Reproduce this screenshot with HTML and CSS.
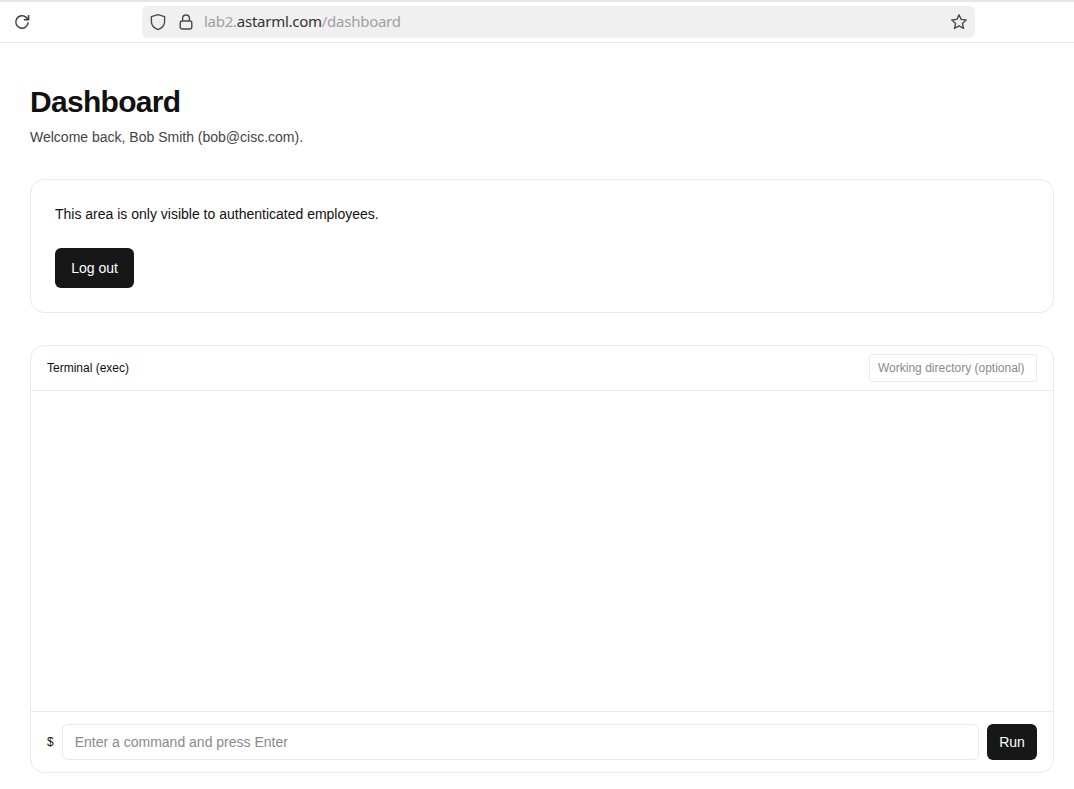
FILE: index.html
```html
<!DOCTYPE html>
<html lang="en">
<head>
<meta charset="utf-8">
<title>Dashboard</title>
<link rel="stylesheet" href="styles.css">
</head>
<body>
<header class="browser">
  <button class="tool" aria-label="Reload">
    <svg width="16" height="16" viewBox="0 0 16 16" fill="none" stroke="#3f3f3f" stroke-width="1.5" stroke-linejoin="round"><path d="M14.2 8.4A6.2 6.2 0 1 1 12.2 3.4L14.4 5.4"/><path d="M14.6 1V5.8H9.8" fill="none"/></svg>
  </button>
  <div class="urlbar">
    <svg class="shield" width="16" height="18" viewBox="0 0 16 18" fill="none" stroke="#4a4a4a" stroke-width="1.4" stroke-linejoin="round"><path d="M8 1.6 14.6 3.6V8.6C14.6 12.4 12 15.2 8 16.6 4 15.2 1.4 12.4 1.4 8.6V3.6Z"/></svg>
    <svg class="lock" width="14" height="16" viewBox="0 0 14 16" fill="none" stroke="#4a4a4a" stroke-width="1.4" stroke-linejoin="round"><rect x="1.2" y="7" width="11.6" height="8" rx="2"/><path d="M3.6 7V4.4a3.4 3.4 0 0 1 6.8 0V7"/></svg>
    <span class="url"><span class="dim">lab2.</span>astarml.com<span class="dim">/dashboard</span></span>
    <svg class="star" width="18" height="18" viewBox="0 0 18 18" fill="none" stroke="#4a4a4a" stroke-width="1.4" stroke-linejoin="round"><path d="M9 1.8 11.1 6.4 16.2 7 12.4 10.4 13.5 15.4 9 12.9 4.5 15.4 5.6 10.4 1.8 7 6.9 6.4Z"/></svg>
  </div>
</header>
<main class="page">
  <h1 class="title">Dashboard</h1>
  <p class="welcome">Welcome back, Bob Smith (bob@cisc.com).</p>
  <section class="card">
    <p class="notice">This area is only visible to authenticated employees.</p>
    <button class="btn btn-logout">Log out</button>
  </section>
  <section class="terminal">
    <div class="term-head">
      <span class="term-title">Terminal (exec)</span>
      <input class="cwd" type="text" placeholder="Working directory (optional)">
    </div>
    <div class="term-output"></div>
    <form class="term-input">
      <span class="prompt">$</span>
      <input class="cmd" type="text" placeholder="Enter a command and press Enter">
      <button class="btn btn-run" type="button">Run</button>
    </form>
  </section>
</main>
</body>
</html>
```
FILE: styles.css
```css
* { box-sizing: border-box; }
html, body { margin: 0; height: 100%; background: #fff; overflow: hidden; }
body { font-family: "Liberation Sans", Arial, sans-serif; color: #111; }

.browser {
  height: 43px;
  border-top: 2px solid #e6e6e6;
  border-bottom: 1px solid #e3e3e3;
  display: flex;
  align-items: center;
  padding: 0 99px 0 14px;
}
.tool { width: 16px; height: 16px; padding: 0; margin: 0 112px 0 0; border: 0; background: none; display: flex; }
.urlbar {
  flex: 1;
  height: 32px;
  margin-top: -1px;
  background: #f0f0f0;
  border-radius: 6px;
  display: flex;
  align-items: center;
  padding: 0 7px 0 8px;
}
.shield { margin-right: 13px; }
.lock { margin-right: 11px; }
.url { font: 15px "Noto Sans", sans-serif; color: #333; flex: 1; letter-spacing: -0.26px; margin-top: -1px; }
.dim { color: #a0a0a0; }

.page { padding: 41px 20px 0 30px; }
.title { margin: 0; font-size: 30px; line-height: 36px; font-weight: 700; letter-spacing: -0.7px; color: #111; }
.welcome { margin: 7px 0 0; font-size: 14px; line-height: 20px; color: #444; }

.card {
  margin-top: 32px;
  height: 134px;
  border: 1px solid #e9e9e9;
  border-radius: 14px;
  padding: 24px;
}
.notice { margin: 0 0 24px; font-size: 14px; line-height: 20px; color: #111; }

.btn {
  background: #171717;
  color: #fff;
  border: 0;
  border-radius: 6px;
  font: 14px "Liberation Sans", Arial, sans-serif;
}
.btn-logout { width: 79px; height: 40px; display: block; }

.terminal {
  margin-top: 32px;
  height: 428px;
  border: 1px solid #e9e9e9;
  border-radius: 14px;
  display: flex;
  flex-direction: column;
}
.term-head {
  height: 45px;
  border-bottom: 1px solid #e9e9e9;
  display: flex;
  align-items: center;
  justify-content: space-between;
  padding: 0 16px;
}
.term-title { font-size: 12px; color: #111; }
.cwd {
  width: 168px;
  height: 28px;
  border: 1px solid #e9e9e9;
  border-radius: 4px;
  padding: 0 8px;
  font: 12px "Liberation Sans", Arial, sans-serif;
  outline: 0;
}
.cwd::placeholder, .cmd::placeholder { color: #8a8a8a; opacity: 1; }
.term-output { flex: 1; }
.term-input {
  height: 61px;
  border-top: 1px solid #e9e9e9;
  display: flex;
  align-items: center;
  padding: 0 16px;
  gap: 8px;
}
.prompt { font-size: 12px; color: #111; }
.cmd {
  flex: 1;
  height: 36px;
  min-width: 0;
  border: 1px solid #e9e9e9;
  border-radius: 6px;
  padding: 0 12px;
  font: 14px "Liberation Sans", Arial, sans-serif;
  outline: 0;
}
.btn-run { width: 50px; height: 36px; }
```
